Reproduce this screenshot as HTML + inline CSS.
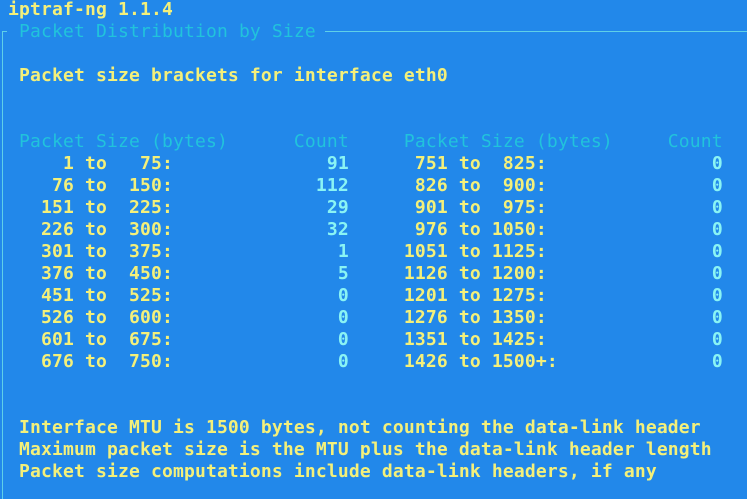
<!DOCTYPE html>
<html><head><meta charset="utf-8"><style>
html,body{margin:0;padding:0;width:747px;height:499px;overflow:hidden;background:#2288ea;}
.l{position:absolute;left:-3px;height:22px;line-height:22px;white-space:pre;font-family:"DejaVu Sans Mono","Liberation Mono",monospace;font-weight:bold;font-size:18px;letter-spacing:0.16px;color:#f4f07a;}
.c{color:#21c3dc;font-weight:normal;}
.v{color:#8af4f4;}
#vb{position:absolute;left:2px;top:31px;width:1px;height:468px;background:#5fd0e8;}
#hb1{position:absolute;left:2px;top:31px;width:5px;height:1px;background:#5fd0e8;}
#hb2{position:absolute;left:325px;top:31px;width:422px;height:1px;background:#5fd0e8;}
</style></head><body>
<div id="vb"></div><div id="hb1"></div><div id="hb2"></div>
<div class="l" style="top:-1px"> iptraf-ng 1.1.4</div>
<div class="l" style="top:21px">  <span class="c">Packet Distribution by Size</span></div>
<div class="l" style="top:65px">  Packet size brackets for interface eth0</div>
<div class="l c" style="top:131px">  Packet Size (bytes)      Count     Packet Size (bytes)     Count</div>
<div class="l" style="top:153px">      1 to   75:           <span class="v">   91</span>      751 to  825:          <span class="v">     0</span></div>
<div class="l" style="top:175px">     76 to  150:           <span class="v">  112</span>      826 to  900:          <span class="v">     0</span></div>
<div class="l" style="top:197px">    151 to  225:           <span class="v">   29</span>      901 to  975:          <span class="v">     0</span></div>
<div class="l" style="top:219px">    226 to  300:           <span class="v">   32</span>      976 to 1050:          <span class="v">     0</span></div>
<div class="l" style="top:241px">    301 to  375:           <span class="v">    1</span>     1051 to 1125:          <span class="v">     0</span></div>
<div class="l" style="top:263px">    376 to  450:           <span class="v">    5</span>     1126 to 1200:          <span class="v">     0</span></div>
<div class="l" style="top:285px">    451 to  525:           <span class="v">    0</span>     1201 to 1275:          <span class="v">     0</span></div>
<div class="l" style="top:307px">    526 to  600:           <span class="v">    0</span>     1276 to 1350:          <span class="v">     0</span></div>
<div class="l" style="top:329px">    601 to  675:           <span class="v">    0</span>     1351 to 1425:          <span class="v">     0</span></div>
<div class="l" style="top:351px">    676 to  750:           <span class="v">    0</span>     1426 to 1500+:         <span class="v">     0</span></div>
<div class="l" style="top:417px">  Interface MTU is 1500 bytes, not counting the data-link header</div>
<div class="l" style="top:439px">  Maximum packet size is the MTU plus the data-link header length</div>
<div class="l" style="top:461px">  Packet size computations include data-link headers, if any</div>
</body></html>
